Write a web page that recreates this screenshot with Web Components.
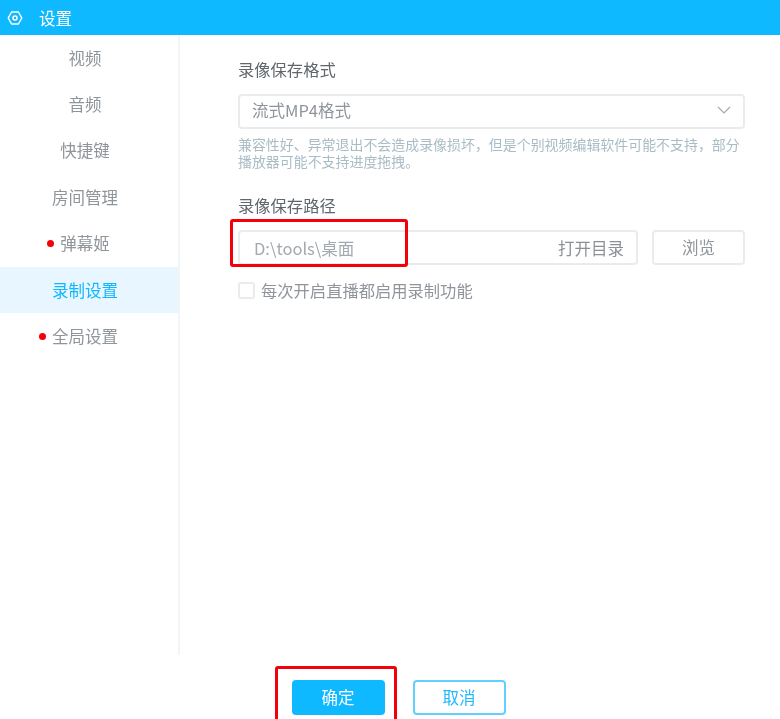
<!DOCTYPE html>
<html lang="zh">
<head>
<meta charset="utf-8">
<title>设置</title>
<style>
  html, body { margin: 0; height: 100%; background: #fff; }
  body { font-family: "Noto Sans CJK SC", "Noto Sans", sans-serif; }
</style>
</head>
<body>
<settings-window></settings-window>

<template id="nav-item-tpl">
  <style>
    :host {
      display: flex;
      align-items: center;
      justify-content: center;
      box-sizing: border-box;
      height: 46.4px;
      padding: 0 8px 1px 0;
      font-size: 16.5px;
      color: #8f959b;
    }
    :host([active]) { background: #e8f7ff; color: #12b7ff; }
    .dot {
      display: none;
      width: 7px;
      height: 7px;
      border-radius: 50%;
      background: #f5000a;
      margin-right: 6px;
      margin-left: -13px;
    }
    :host([dot]) .dot { display: block; }
  </style>
  <span class="dot"></span><slot></slot>
</template>

<script>
class NavItem extends HTMLElement {
  constructor() {
    super();
    const tpl = document.getElementById("nav-item-tpl");
    this.attachShadow({ mode: "open" }).appendChild(tpl.content.cloneNode(true));
  }
}

class TitleBar extends HTMLElement {
  constructor() {
    super();
    this.attachShadow({ mode: "open" }).innerHTML = `
      <style>
        :host {
          display: flex;
          align-items: center;
          height: 35px;
          background: #0fb9ff;
          color: #fff;
          font-size: 16.5px;
          padding-left: 7px;
          gap: 16px;
        }
        svg { display: block; }
      </style>
      <svg width="16" height="16" viewBox="0 0 16 16" fill="none" stroke="#fff" stroke-width="1.5" stroke-linejoin="round">
        <path d="M4.6 2h6.8l3.4 6-3.4 6H4.6L1.2 8z"/>
        <circle cx="8" cy="8" r="2"/>
      </svg>
      <slot></slot>`;
  }
}

class SideNav extends HTMLElement {
  constructor() {
    super();
    this.attachShadow({ mode: "open" }).innerHTML = `
      <style>
        :host {
          display: block;
          width: 178px;
          height: 620px;
          border-right: 2px solid #f3f4f6;
          flex: none;
        }
      </style>
      <slot></slot>`;
  }
}

class FieldLabel extends HTMLElement {
  constructor() {
    super();
    this.attachShadow({ mode: "open" }).innerHTML = `
      <style>
        :host { display: block; font-size: 16.3px; line-height: 22px; color: #5f666c; }
      </style>
      <slot></slot>`;
  }
}

class SelectBox extends HTMLElement {
  constructor() {
    super();
    this.attachShadow({ mode: "open" }).innerHTML = `
      <style>
        :host {
          display: flex;
          align-items: center;
          justify-content: space-between;
          box-sizing: border-box;
          height: 34.5px;
          border: 2px solid #e9ebed;
          border-radius: 4px;
          padding: 0 12px 2px 12px;
          font-size: 16.5px;
          color: #8f959b;
        }
      </style>
      <slot></slot>
      <svg width="14" height="8" viewBox="0 0 14 8" fill="none" stroke="#a5abb0" stroke-width="1.2">
        <path d="M1 1l6 6 6-6"/>
      </svg>`;
  }
}

class PathInput extends HTMLElement {
  constructor() {
    super();
    this.attachShadow({ mode: "open" }).innerHTML = `
      <style>
        :host {
          display: flex;
          align-items: center;
          justify-content: space-between;
          flex: 1;
          box-sizing: border-box;
          height: 35px;
          border: 2px solid #e9ebed;
          border-radius: 4px;
          padding: 0 12px 0 14px;
          font-size: 16.5px;
          color: #a2a9af;
        }
        .open { color: #8b9197; }
      </style>
      <slot></slot>
      <span class="open">打开目录</span>`;
  }
}

class PlainButton extends HTMLElement {
  constructor() {
    super();
    this.attachShadow({ mode: "open" }).innerHTML = `
      <style>
        :host {
          display: flex;
          align-items: center;
          justify-content: center;
          box-sizing: border-box;
          width: 93px;
          height: 35px;
          padding-bottom: 1px;
          border-radius: 4px;
          border: 2px solid #e9ebed;
          font-size: 16.5px;
          color: #8f959b;
        }
        :host([primary]) { background: #0fb9ff; border-color: #0fb9ff; color: #fff; padding-bottom: 2px; }
        :host([outline]) { border-color: #5fd0ff; color: #20b9fb; padding-bottom: 2px; }
      </style>
      <slot></slot>`;
  }
}

class CheckRow extends HTMLElement {
  constructor() {
    super();
    this.attachShadow({ mode: "open" }).innerHTML = `
      <style>
        :host {
          display: flex;
          align-items: center;
          gap: 6px;
          font-size: 16.3px;
          line-height: 22px;
          color: #8f959b;
        }
        .box {
          width: 17px;
          height: 17px;
          box-sizing: border-box;
          border: 2px solid #e9ebed;
          border-radius: 3px;
        }
      </style>
      <span class="box"></span><slot></slot>`;
  }
}

class SettingsWindow extends HTMLElement {
  constructor() {
    super();
    this.attachShadow({ mode: "open" }).innerHTML = `
      <style>
        :host {
          display: block;
          position: relative;
          width: 780px;
          height: 719px;
          overflow: hidden;
          background: #fff;
          font-family: "Noto Sans CJK SC", "Noto Sans", sans-serif;
          filter: blur(0.4px);
        }
        .body { display: flex; }
        .panel { flex: 1; padding: 23px 35px 0 58px; }
        .hint {
          margin: 7px 0 0;
          font-size: 13.95px;
          line-height: 17px;
          color: #a9bcc6;
          white-space: nowrap;
        }
        .select { margin-top: 14px; }
        .path-label { margin-top: 24.5px; }
        .path-row { display: flex; gap: 14px; margin-top: 14px; }
        .check { margin-top: 14px; }
        .footer { display: flex; justify-content: center; gap: 28px; margin-top: 25px; padding-left: 17px; }
        .mark {
          position: absolute;
          box-sizing: border-box;
          border: 3px solid #f5000a;
          border-radius: 3px;
        }
        .mark.path { left: 230px; top: 219px; width: 178px; height: 48px; }
        .mark.ok { left: 275px; top: 666px; width: 122px; height: 60px; }
      </style>
      <title-bar>设置</title-bar>
      <div class="body">
        <side-nav>
          <nav-item>视频</nav-item>
          <nav-item>音频</nav-item>
          <nav-item>快捷键</nav-item>
          <nav-item>房间管理</nav-item>
          <nav-item dot>弹幕姬</nav-item>
          <nav-item active>录制设置</nav-item>
          <nav-item dot>全局设置</nav-item>
        </side-nav>
        <div class="panel">
          <field-label>录像保存格式</field-label>
          <select-box class="select">流式MP4格式</select-box>
          <p class="hint">兼容性好、异常退出不会造成录像损坏，但是个别视频编辑软件可能不支持，部分<br>播放器可能不支持进度拖拽。</p>
          <field-label class="path-label">录像保存路径</field-label>
          <div class="path-row">
            <path-input>D:\\tools\\桌面</path-input>
            <plain-button>浏览</plain-button>
          </div>
          <check-row class="check">每次开启直播都启用录制功能</check-row>
        </div>
      </div>
      <div class="footer">
        <plain-button primary>确定</plain-button>
        <plain-button outline>取消</plain-button>
      </div>
      <div class="mark path"></div>
      <div class="mark ok"></div>`;
  }
}

customElements.define("nav-item", NavItem);
customElements.define("title-bar", TitleBar);
customElements.define("side-nav", SideNav);
customElements.define("field-label", FieldLabel);
customElements.define("select-box", SelectBox);
customElements.define("path-input", PathInput);
customElements.define("plain-button", PlainButton);
customElements.define("check-row", CheckRow);
customElements.define("settings-window", SettingsWindow);
</script>
</body>
</html>
